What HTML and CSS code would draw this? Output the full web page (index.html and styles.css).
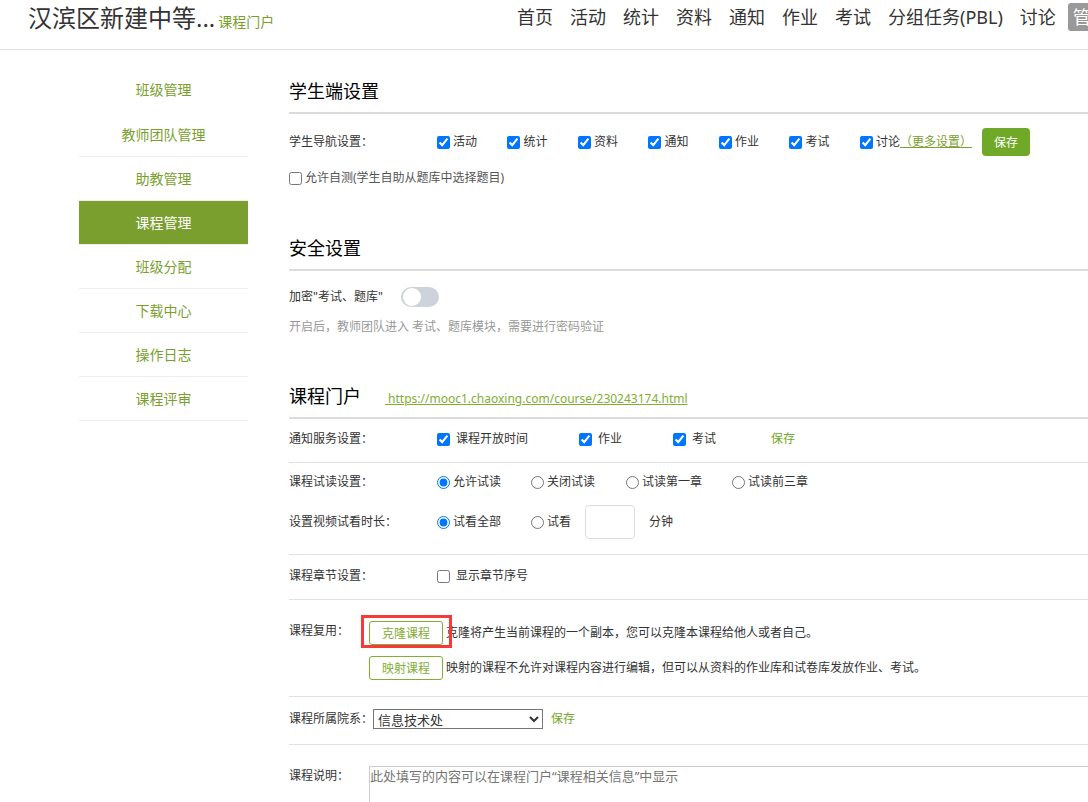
FILE: index.html
```html
<!DOCTYPE html>
<html lang="zh-CN">
<head>
    <meta charset="UTF-8">
    <meta name="viewport" content="width=device-width, initial-scale=1.0">
    <title>课程管理</title>
    <link rel="stylesheet" href="styles.css">
</head>
<body>
    <header class="header">
        <div class="brand">
            <span class="course-name">汉滨区新建中等...</span>
            <a class="portal-link" href="#portal">课程门户</a>
        </div>
        <nav class="top-nav">
            <a href="#">首页</a>
            <a href="#">活动</a>
            <a href="#">统计</a>
            <a href="#">资料</a>
            <a href="#">通知</a>
            <a href="#">作业</a>
            <a href="#">考试</a>
            <a href="#">分组任务(PBL)</a>
            <a href="#">讨论</a>
            <a href="#" class="active">管理</a>
        </nav>
    </header>

    <div class="page">
        <nav class="sidebar">
            <a class="first" href="#">班级管理</a>
            <a href="#">教师团队管理</a>
            <a href="#">助教管理</a>
            <a class="active" href="#">课程管理</a>
            <a href="#">班级分配</a>
            <a href="#">下载中心</a>
            <a href="#">操作日志</a>
            <a href="#">课程评审</a>
        </nav>

        <main class="content">
            <section class="section">
                <h2>学生端设置</h2>
                <div class="row row-nav">
                    <span class="label">学生导航设置：</span>
                    <div class="nav-options">
                        <label class="check"><input type="checkbox" checked>活动</label>
                        <label class="check"><input type="checkbox" checked>统计</label>
                        <label class="check"><input type="checkbox" checked>资料</label>
                        <label class="check"><input type="checkbox" checked>通知</label>
                        <label class="check"><input type="checkbox" checked>作业</label>
                        <label class="check"><input type="checkbox" checked>考试</label>
                        <span class="check-more">
                            <label class="check"><input type="checkbox" checked>讨论</label><a class="more" href="#">（更多设置）</a>
                        </span>
                    </div>
                    <button class="btn-save" type="button">保存</button>
                </div>
                <div class="row row-test">
                    <label class="check muted"><input type="checkbox">允许自测(学生自助从题库中选择题目)</label>
                </div>
            </section>

            <section class="section">
                <h2>安全设置</h2>
                <div class="row row-lock">
                    <label for="lock">加密"考试、题库"</label>
                    <input class="switch" type="checkbox" id="lock">
                </div>
                <p class="hint">开启后，教师团队进入 考试、题库模块，需要进行密码验证</p>
            </section>

            <section class="section" id="portal">
                <h2>课程门户<a class="url" href="#">&nbsp;https://mooc1.chaoxing.com/course/230243174.html</a></h2>

                <div class="block block-notice">
                    <div class="row">
                        <span class="label">通知服务设置：</span>
                        <div class="notice-options">
                            <label class="check wide"><input type="checkbox" checked>课程开放时间</label>
                            <label class="check wide"><input type="checkbox" checked>作业</label>
                            <label class="check wide"><input type="checkbox" checked>考试</label>
                        </div>
                        <button class="btn-text" type="button">保存</button>
                    </div>
                </div>

                <div class="block block-trial">
                    <div class="row">
                        <span class="label">课程试读设置：</span>
                        <div class="radio-grid">
                            <label class="check"><input type="radio" name="read" checked>允许试读</label>
                            <label class="check"><input type="radio" name="read">关闭试读</label>
                            <label class="check"><input type="radio" name="read">试读第一章</label>
                            <label class="check"><input type="radio" name="read">试读前三章</label>
                        </div>
                    </div>
                    <div class="row">
                        <span class="label">设置视频试看时长：</span>
                        <div class="radio-grid video">
                            <label class="check"><input type="radio" name="video" checked>试看全部</label>
                            <label class="check"><input type="radio" name="video">试看</label>
                            <span class="minutes">
                                <input class="minutes-input" type="text" id="minutes">
                                <label for="minutes">分钟</label>
                            </span>
                        </div>
                    </div>
                </div>

                <div class="block block-chapter">
                    <div class="row">
                        <span class="label">课程章节设置：</span>
                        <label class="check wide"><input type="checkbox">显示章节序号</label>
                    </div>
                </div>

                <div class="block block-reuse">
                    <span class="label short">课程复用：</span>
                    <div class="reuse-list">
                        <div class="row">
                            <span class="marked"><button class="btn-outline" type="button">克隆课程</button></span>
                            <span>克隆将产生当前课程的一个副本，您可以克隆本课程给他人或者自己。</span>
                        </div>
                        <div class="row">
                            <button class="btn-outline" type="button">映射课程</button>
                            <span>映射的课程不允许对课程内容进行编辑，但可以从资料的作业库和试卷库发放作业、考试。</span>
                        </div>
                    </div>
                </div>

                <div class="block block-dept">
                    <div class="row">
                        <label for="dept">课程所属院系：</label>
                        <select id="dept">
                            <option>信息技术处</option>
                        </select>
                        <button class="btn-text" type="button">保存</button>
                    </div>
                </div>

                <div class="block-desc">
                    <label class="label short" for="desc">课程说明：</label>
                    <textarea id="desc" placeholder="此处填写的内容可以在课程门户“课程相关信息”中显示"></textarea>
                </div>
            </section>
        </main>
    </div>
</body>
</html>
```

FILE: styles.css
```css
* { box-sizing: border-box; }
body { margin: 0; font-family: "Noto Sans", "Noto Sans CJK SC", sans-serif; font-size: 12px; line-height: 20px; color: #333; background-color: #fff; overflow-x: hidden; }
a { color: #7a9f2f; text-decoration: none; }
button, input, select, textarea { font-family: inherit; margin: 0; }
button { cursor: pointer; }

/* header */
.header { display: flex; height: 50px; padding-left: 28px; border-bottom: 1px solid #e1e1e1; overflow: hidden; white-space: nowrap; }
.brand { display: flex; align-items: baseline; gap: 3px; flex: 0 0 489px; line-height: 36px; }
.course-name { font-size: 24px; }
.portal-link { font-size: 14px; }
.top-nav { display: flex; align-items: flex-start; gap: 17px; padding-top: 3px; font-size: 18px; line-height: 28px; }
.top-nav a { color: #333; }
.top-nav .active { margin-left: -5px; padding: 0 5px; background-color: #999; color: #fff; border-radius: 3px; }

/* layout */
.page { display: grid; grid-template-columns: 169px minmax(0, 1fr); gap: 41px; padding: 18px 0 0 79px; }
.sidebar a { display: block; height: 44px; line-height: 43px; border-bottom: 1px solid #eee; text-align: center; font-size: 14px; }
.sidebar .first { border-bottom-color: transparent; margin-bottom: 1px; }
.sidebar .active { background-color: #7a9f2f; color: #fff; background-clip: padding-box; }

.section h2 { display: flex; align-items: baseline; gap: 24px; height: 46px; margin: 0; border-bottom: 2px solid #dcdcdc; font-size: 18px; line-height: 46px; font-weight: normal; color: #000; }
.row { display: flex; align-items: center; white-space: nowrap; }
.label { flex: 0 0 148px; }
.label.short { flex-basis: 80px; }

/* controls */
.check { display: inline-flex; align-items: center; gap: 3px; }
.check input { width: 13px; height: 13px; }
.check.wide { gap: 6px; }
.muted { color: #555; }
.btn-save { width: 48px; height: 28px; margin-left: 10px; padding: 0; border: none; border-radius: 4px; background-color: #70a828; color: #fff; font-size: 12px; }
.btn-text { padding: 0; border: none; background: none; color: #70a828; font-size: 12px; line-height: 20px; }
.btn-outline { width: 74px; height: 24px; padding: 0; border: 1px solid #82ae32; border-radius: 3px; background-color: #fff; color: #82ae32; font-size: 12px; }
.switch { appearance: none; display: flex; align-items: center; width: 38px; height: 20px; padding: 2px; border-radius: 10px; background-color: #ced3db; }
.switch::before { content: ""; width: 18px; height: 18px; margin: -1px 0; border-radius: 50%; background-color: #fff; }
.switch:checked { justify-content: flex-end; background-color: #70a828; }

/* student settings */
.row-nav { padding-top: 14px; }
.nav-options { display: flex; justify-content: space-between; flex: 0 0 535px; }
.check-more { display: flex; }
.more { text-decoration: underline; }
.row-test { height: 44px; margin-bottom: 25px; }

/* security */
.row-lock { padding-top: 16px; gap: 18px; }
.hint { margin: 10px 0 36px; color: #999; }

/* portal */
.url { color: #82ae32; font-size: 12px; line-height: 20px; text-decoration: underline; }
.block { border-bottom: 1px solid #e1e1e1; }
.block-notice { padding: 10px 0 13px; }
.notice-options { display: flex; align-items: center; gap: 51px; }
.block-notice .btn-text { margin-left: 55px; }
.block-trial { padding: 9px 0 15px; }
.radio-grid { display: grid; grid-template-columns: 94px 95px 106px auto; align-items: center; }
.block-trial .row + .row { margin-top: 13px; }
.radio-grid.video { grid-template-columns: 94px 54px auto; }
.minutes { display: flex; align-items: center; gap: 14px; }
.minutes-input { width: 50px; height: 34px; padding: 0 6px; border: 1px solid #ddd; border-radius: 4px; }
.block-chapter { padding: 11px 0 13px; }
.block-reuse { display: flex; padding: 21px 0 16px; }
.reuse-list { display: grid; gap: 11px; }
.reuse-list .row { gap: 3px; }
.marked { position: relative; display: flex; }
.marked::after { content: ""; position: absolute; inset: -6px -9px -3px -8px; border: 3px solid #f93939; pointer-events: none; }
.block-dept { padding: 12px 0 15px; }
.block-dept select { width: 170px; height: 20px; padding: 0; border: 1px solid #767676; background-color: #fff; color: #333; font-size: 13px; }
.block-dept .btn-text { margin-left: 8px; }
.block-desc { display: flex; padding-top: 21px; }
.block-desc textarea { flex: 1; height: 100px; padding: 0; border: 1px solid #ccc; border-right: none; font-size: 13px; line-height: 18px; resize: none; }
.block-desc textarea::placeholder { color: #757575; }
```
